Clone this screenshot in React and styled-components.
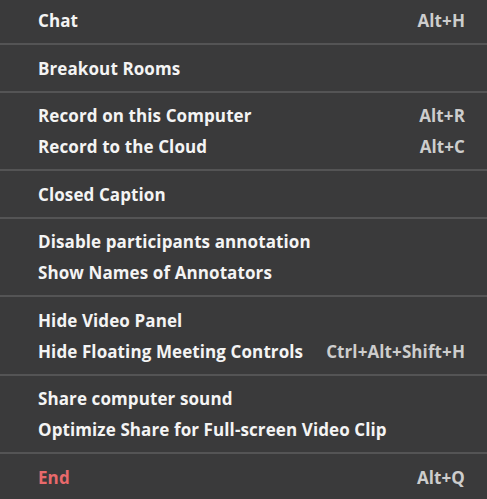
import React from "react";
import styled, { createGlobalStyle } from "styled-components";

const GlobalStyle = createGlobalStyle`
  html, body {
    margin: 0;
    padding: 0;
    background: #3a3a3b;
  }
`;

const groups = [
  [{ label: "Chat", shortcut: "Alt+H" }],
  [{ label: "Breakout Rooms" }],
  [
    { label: "Record on this Computer", shortcut: "Alt+R" },
    { label: "Record to the Cloud", shortcut: "Alt+C" },
  ],
  [{ label: "Closed Caption" }],
  [
    { label: "Disable participants annotation" },
    { label: "Show Names of Annotators" },
  ],
  [
    { label: "Hide Video Panel" },
    { label: "Hide Floating Meeting Controls", shortcut: "Ctrl+Alt+Shift+H" },
  ],
  [
    { label: "Share computer sound" },
    { label: "Optimize Share for Full-screen Video Clip" },
  ],
  [{ label: "End", shortcut: "Alt+Q", danger: true }],
];

const Menu = styled.div`
  width: 487px;
  height: 499px;
  box-sizing: border-box;
  padding-top: 5px;
  background: #3a3a3b;
  font-family: "Open Sans", "Noto Sans", sans-serif;
  font-weight: 700;
  font-size: 17px;
  letter-spacing: 0.1px;
  overflow: hidden;
`;

const Item = styled.div`
  display: flex;
  align-items: center;
  justify-content: space-between;
  height: 31px;
  padding: 0 22px 0 38px;
  color: ${(p) => (p.$danger ? "#e8696b" : "#f4f4f4")};
  cursor: default;
`;

const Shortcut = styled.span`
  color: #cdcdcd;
`;

const Separator = styled.div`
  height: 2px;
  margin: 7px 0 7.5px;
  background: #545455;
`;

export default function App() {
  return (
    <>
      <GlobalStyle />
      <Menu>
        {groups.map((group, gi) => (
          <React.Fragment key={gi}>
            {gi > 0 && <Separator />}
            {group.map((item) => (
              <Item key={item.label} $danger={item.danger}>
                <span>{item.label}</span>
                {item.shortcut && <Shortcut>{item.shortcut}</Shortcut>}
              </Item>
            ))}
          </React.Fragment>
        ))}
      </Menu>
    </>
  );
}
